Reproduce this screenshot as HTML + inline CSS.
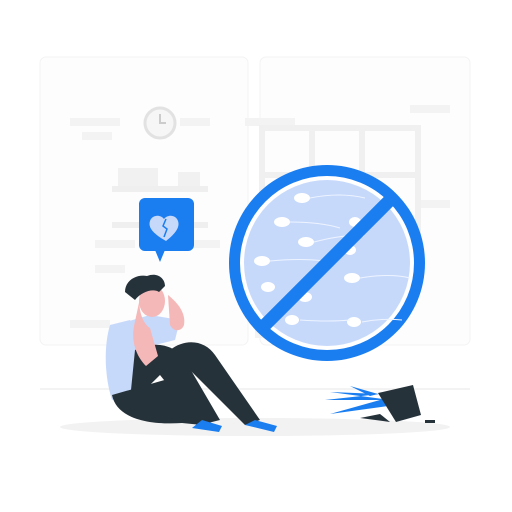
<!DOCTYPE html>
<html><head><style>body{margin:0;background:#fff}svg{display:block}</style></head><body>
<svg width="512" height="512" viewBox="0 0 512 512">
<rect width="512" height="512" fill="#fff"/>
<rect x="40" y="57" width="208" height="288" rx="6" fill="#fdfdfd" stroke="#f3f3f3"/>
<rect x="260" y="57" width="210" height="288" rx="6" fill="#fdfdfd" stroke="#f3f3f3"/>
<g fill="#f3f3f3">
<rect x="70" y="118" width="50" height="8"/><rect x="82" y="132" width="30" height="8"/><rect x="180" y="118" width="30" height="8"/>
<rect x="95" y="240" width="40" height="8"/><rect x="95" y="265" width="30" height="8"/><rect x="180" y="240" width="40" height="8"/>
<rect x="245" y="118" width="50" height="8"/><rect x="410" y="105" width="40" height="8"/><rect x="420" y="200" width="30" height="8"/>
<rect x="70" y="320" width="40" height="8"/><rect x="255" y="330" width="40" height="8"/>
</g>
<g fill="none" stroke="#f0f0f0" stroke-width="6">
<rect x="262" y="128" width="156" height="124"/><line x1="312" y1="128" x2="312" y2="252"/><line x1="362" y1="128" x2="362" y2="252"/><line x1="262" y1="175" x2="418" y2="175"/>
</g>
<circle cx="160" cy="123" r="15" fill="#f6f6f6" stroke="#e2e2e2" stroke-width="3"/>
<path d="M160 114v9h6" stroke="#ccc" stroke-width="2" fill="none"/>
<rect x="112" y="186" width="96" height="6" fill="#efefef"/>
<rect x="118" y="168" width="40" height="18" fill="#f1f1f1"/><rect x="178" y="172" width="22" height="14" fill="#f1f1f1"/>
<rect x="112" y="222" width="96" height="6" fill="#efefef"/>
<rect x="40" y="388" width="430" height="2" fill="#f3f3f3"/>
<ellipse cx="255" cy="427" rx="195" ry="9" fill="#f2f2f2"/>
<rect x="139" y="198" width="55" height="53" rx="6" fill="#1a7df0"/>
<path d="M155 250l5 12l5-12z" fill="#1a7df0"/>
<path d="M166 241c-14-8-18-14-16-20c2-6 10-7 14-2c4-5 12-4 14 2c2 6-2 12-12 20z" fill="#c6d9fb"/>
<path d="M166 219l-3 7l4 3l-3 8" stroke="#1a7df0" stroke-width="1.5" fill="none"/>
<circle cx="327" cy="263" r="98" fill="#1a7df0"/>
<circle cx="327" cy="263" r="87" fill="#fff"/>
<circle cx="327" cy="263" r="83" fill="#c6d9fb"/>
<g fill="#fff">
<ellipse cx="302" cy="198" rx="8" ry="5"/><ellipse cx="282" cy="222" rx="8" ry="5"/><ellipse cx="306" cy="242" rx="8" ry="5"/>
<ellipse cx="262" cy="261" rx="8" ry="5"/><ellipse cx="268" cy="287" rx="7" ry="5"/><ellipse cx="352" cy="278" rx="8" ry="5"/>
<ellipse cx="305" cy="297" rx="7" ry="5"/><ellipse cx="292" cy="320" rx="7" ry="5"/><ellipse cx="354" cy="322" rx="7" ry="5"/>
<ellipse cx="355" cy="222" rx="6" ry="5"/><ellipse cx="350" cy="250" rx="6" ry="5"/>
</g>
<g stroke="#eef4ff" stroke-width="1" fill="none">
<path d="M310 198q30-6 55 0"/><path d="M290 222q30 0 50 6"/><path d="M314 242q30-8 50-6"/><path d="M270 261q30-3 55 0"/><path d="M360 278q30-5 50 0"/><path d="M300 320q30 2 50 0"/><path d="M362 322q20-4 40-2"/>
</g>
<line x1="262" y1="328" x2="392" y2="198" stroke="#1a7df0" stroke-width="13"/>
<g fill="#1a7df0">
<path d="M390 400l-60-8l50 2l-55 6l55 0l-50 14l58-8z"/>
<path d="M370 396l-20-10l28 8z"/>
</g>
<path d="M378 393l35-8l8 30l-25 7z" fill="#26323a"/>
<path d="M360 418l30 4l-10-8z" fill="#26323a"/>
<rect x="425" y="420" width="10" height="3" fill="#26323a"/>
<path d="M110 325c-6 20-6 50 2 75l25-10l3-50l-10-20z" fill="#c6d9fb"/>
<path d="M115 325l35-10l30 5l-5 20l-20 5z" fill="#c6d9fb"/>
<path d="M112 395c5 25 40 30 70 28l20 2l-20-50z" fill="#26323a"/>
<path d="M135 350c20-10 40-5 50 10l35 60l-20 5l-40-50c-10 10-20 20-30 25z" fill="#26323a"/>
<path d="M170 350c15-12 35-10 45 5l45 65l-15 5l-45-45z" fill="#26323a"/>
<path d="M192 428l10-8l20 6l-3 6z" fill="#1a7df0"/>
<path d="M245 425l10-5l22 6l-3 6z" fill="#1a7df0"/>
<path d="M140 298c-2 10 2 25 10 30l8 28l-12 10c-10-10-15-25-12-40z" fill="#f5b8b8"/>
<path d="M168 295c10 8 18 18 16 30c-2 6-10 8-14 0z" fill="#f5b8b8"/>
<ellipse cx="152" cy="301" rx="13" ry="16" fill="#f5b8b8"/>
<path d="M125 292c0-12 12-18 22-16c10-4 18 2 18 10l-6 6c-6-4-18 0-24 8z" fill="#26323a"/>
</svg>
</body></html>
